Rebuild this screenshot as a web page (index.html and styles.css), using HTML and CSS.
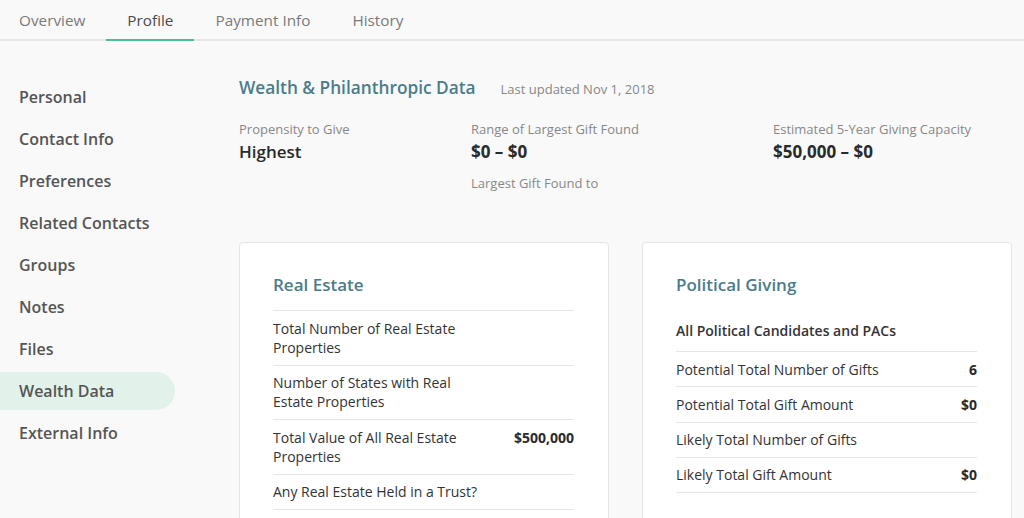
FILE: index.html
```html
<!DOCTYPE html>
<html>
<head>
<meta charset="utf-8">
<link rel="stylesheet" href="styles.css">
</head>
<body>
<nav class="tabs">
  <a class="tab">Overview</a>
  <a class="tab active">Profile</a>
  <a class="tab">Payment Info</a>
  <a class="tab">History</a>
</nav>
<div class="layout">
  <aside class="side">
    <a class="side-item">Personal</a>
    <a class="side-item">Contact Info</a>
    <a class="side-item">Preferences</a>
    <a class="side-item">Related Contacts</a>
    <a class="side-item">Groups</a>
    <a class="side-item">Notes</a>
    <a class="side-item">Files</a>
    <a class="side-item active">Wealth Data</a>
    <a class="side-item">External Info</a>
  </aside>
  <main class="main">
    <div class="head">
      <h1 class="title">Wealth &amp; Philanthropic Data</h1>
      <span class="updated">Last updated Nov 1, 2018</span>
    </div>
    <div class="stats">
      <div class="stat">
        <div class="stat-label">Propensity to Give</div>
        <div class="stat-value medium">Highest</div>
      </div>
      <div class="stat">
        <div class="stat-label">Range of Largest Gift Found</div>
        <div class="stat-value">$0 – $0</div>
        <div class="stat-label extra">Largest Gift Found to</div>
      </div>
      <div class="stat">
        <div class="stat-label">Estimated 5-Year Giving Capacity</div>
        <div class="stat-value">$50,000 – $0</div>
      </div>
    </div>
    <div class="cards">
      <section class="card">
        <h2 class="card-title">Real Estate</h2>
        <div class="rows">
          <div class="row"><span class="lbl">Total Number of Real Estate Properties</span><span class="val"></span></div>
          <div class="row"><span class="lbl">Number of States with Real Estate Properties</span><span class="val"></span></div>
          <div class="row"><span class="lbl">Total Value of All Real Estate Properties</span><span class="val">$500,000</span></div>
          <div class="row"><span class="lbl wide">Any Real Estate Held in a Trust?</span><span class="val"></span></div>
          <div class="row"><span class="lbl">&nbsp;</span><span class="val"></span></div>
        </div>
      </section>
      <section class="card">
        <h2 class="card-title plain">Political Giving</h2>
        <div class="sub">All Political Candidates and PACs</div>
        <div class="rows">
          <div class="row"><span class="lbl wide">Potential Total Number of Gifts</span><span class="val">6</span></div>
          <div class="row"><span class="lbl wide">Potential Total Gift Amount</span><span class="val">$0</span></div>
          <div class="row"><span class="lbl wide">Likely Total Number of Gifts</span><span class="val"></span></div>
          <div class="row"><span class="lbl wide">Likely Total Gift Amount</span><span class="val">$0</span></div>
        </div>
      </section>
    </div>
  </main>
</div>
</body>
</html>
```
FILE: styles.css
```css
* { box-sizing: border-box; }
html, body {
  margin: 0;
  padding: 0;
  background: #f9f9f9;
  font-family: "Open Sans", "Liberation Sans", sans-serif;
  color: #333;
  overflow: hidden;
}
.tabs {
  display: flex;
  height: 41px;
  border-bottom: 2px solid #e6e6e6;
  margin-left: -2px;
}
.tab {
  display: block;
  padding: 0 21px;
  height: 41px;
  line-height: 40px;
  font-size: 15.3px;
  color: #7a7a7a;
  margin-bottom: -2px;
  border-bottom: 2px solid transparent;
}
.tab.active {
  color: #4a4a4a;
  border-bottom-color: #4dbb93;
}
.layout {
  display: flex;
}
.side {
  width: 239px;
  flex: 0 0 239px;
  padding-top: 37px;
  display: flex;
  flex-direction: column;
  gap: 4px;
}
.side-item {
  display: block;
  width: 175px;
  height: 38px;
  line-height: 38px;
  padding-left: 19px;
  font-size: 16px;
  font-weight: 600;
  color: #555;
  border-radius: 0 19px 19px 0;
}
.side-item.active {
  background: #e2f2ea;
}
.main {
  flex: 1;
  padding-top: 34px;
  padding-right: 12px;
}
.head {
  display: flex;
  align-items: baseline;
  gap: 25px;
}
.title {
  margin: 0;
  font-size: 17.25px;
  font-weight: 600;
  color: #4b7c8a;
  line-height: 26px;
}
.updated {
  font-size: 13px;
  color: #888;
}
.stats {
  display: grid;
  grid-template-columns: 232px 302px auto;
  margin-top: 19px;
}
.stat-label {
  font-size: 13px;
  color: #888;
  line-height: 18px;
}
.stat-label.extra {
  margin-top: 8px;
}
.stat-value {
  font-size: 17px;
  font-weight: 700;
  color: #2a2a2a;
  line-height: 28px;
}
.stat-value.medium {
  font-weight: 600;
}
.cards {
  display: flex;
  gap: 33px;
  margin-top: 50px;
}
.card {
  width: 370px;
  flex: 0 0 370px;
  height: 320px;
  background: #fff;
  border: 1px solid #e5e5e5;
  border-radius: 4px;
  padding: 29px 34px 0 33px;
}
.card-title {
  margin: 0;
  font-size: 17px;
  font-weight: 600;
  color: #4b7c8a;
  line-height: 26px;
  padding-bottom: 12px;
  border-bottom: 1px solid #e6e6e6;
}
.card-title.plain {
  border-bottom-color: transparent;
}
.sub {
  font-size: 14px;
  font-weight: 600;
  color: #333;
  line-height: 20px;
  padding: 10px 0 10px;
  border-bottom: 1px solid #e6e6e6;
}
.row {
  display: flex;
  justify-content: space-between;
  align-items: flex-start;
  padding: 7.5px 0;
  border-bottom: 1px solid #e6e6e6;
  font-size: 14px;
  line-height: 1.375;
}
.lbl {
  width: 202px;
  color: #333;
}
.lbl.wide {
  width: auto;
}
.val {
  font-weight: 700;
  color: #2a2a2a;
}
```
